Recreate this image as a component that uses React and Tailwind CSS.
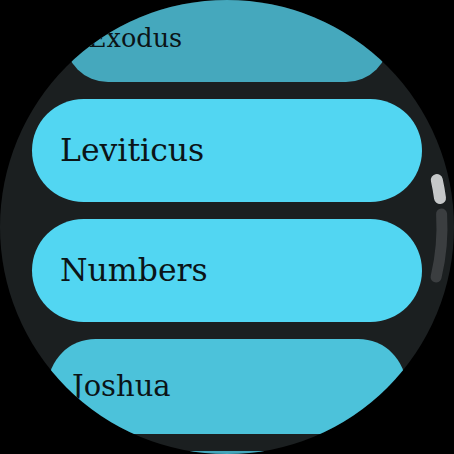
import React from "react";

const books = [
  { name: "Exodus", w: 324, h: 86, size: 25.5, pl: 23, pb: 0, bg: "bg-[#45a8bd]" },
  { name: "Leviticus", w: 390, h: 103, size: 31.5, pl: 28, pb: 0, bg: "bg-[#52d6f2]" },
  { name: "Numbers", w: 390, h: 103, size: 31.5, pl: 28, pb: 0, bg: "bg-[#52d6f2]" },
  { name: "Joshua", w: 358, h: 95, size: 29, pl: 24, pb: 0, bg: "bg-[#4cc2da]" },
  { name: "", w: 330, h: 88, size: 26, pl: 24, pb: 0, bg: "bg-[#43a6bb]" },
];

function Chip({ book }) {
  return (
    <div
      className={`shrink-0 flex items-center rounded-full ${book.bg}`}
      style={{ width: book.w, height: book.h, paddingLeft: book.pl, paddingBottom: book.pb }}
    >
      {book.name && (
        <span
          className="text-[#0b1417] leading-none"
          style={{ fontSize: book.size, fontFamily: '"DejaVu Serif", "Liberation Serif", serif' }}
        >
          {book.name}
        </span>
      )}
    </div>
  );
}

export default function App() {
  return (
    <div className="w-[454px] h-[454px] bg-black">
      <div className="relative w-[454px] h-[454px] rounded-full overflow-hidden bg-[#1b1f20]">
        <div className="flex flex-col items-center gap-[17px] mt-[-4px]">
          {books.map((b, i) => (
            <Chip key={i} book={b} />
          ))}
        </div>
        {/* curved scroll indicator along the bezel */}
        <svg className="absolute inset-0" width="454" height="454" viewBox="0 0 454 454">
          <path
            d="M 441.6 214 A 215 215 0 0 1 436.1 277"
            fill="none"
            stroke="#3b3e40"
            strokeWidth="11"
            strokeLinecap="round"
          />
          <path
            d="M 436.8 180 A 215 215 0 0 1 440 198"
            fill="none"
            stroke="#c6c8c9"
            strokeWidth="12"
            strokeLinecap="round"
          />
        </svg>
      </div>
    </div>
  );
}
